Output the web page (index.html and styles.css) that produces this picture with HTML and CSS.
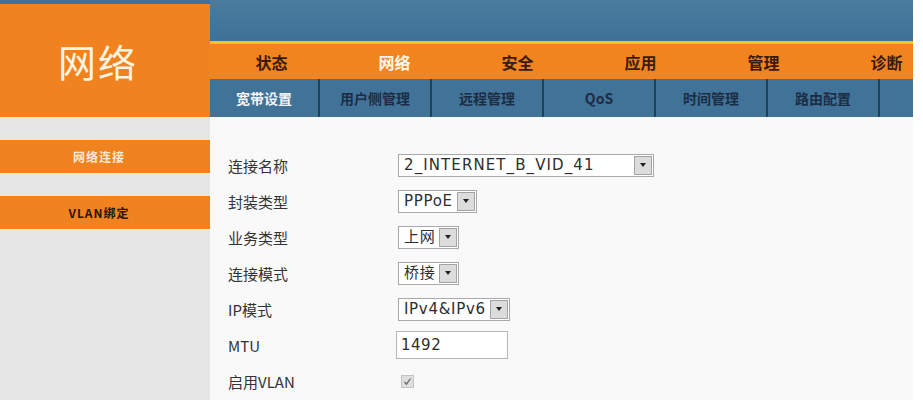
FILE: index.html
```html
<!DOCTYPE html>
<html lang="zh-CN">
<head>
    <meta charset="UTF-8">
    <title>网络 - 宽带设置</title>
    <link rel="stylesheet" href="styles.css">
</head>
<body>
    <div class="page">
        <div class="brand">网络</div>
        <div class="header">
            <div class="banner"></div>
            <div class="nav">
                <span class="tab">状态</span>
                <span class="tab active">网络</span>
                <span class="tab">安全</span>
                <span class="tab">应用</span>
                <span class="tab">管理</span>
                <span class="tab">诊断</span>
            </div>
            <div class="subnav">
                <span class="sub first active">宽带设置</span>
                <span class="sub">用户侧管理</span>
                <span class="sub">远程管理</span>
                <span class="sub">QoS</span>
                <span class="sub">时间管理</span>
                <span class="sub">路由配置</span>
                <span class="sub last"></span>
            </div>
        </div>

        <div class="sidebar">
            <div class="side-item active">网络连接</div>
            <div class="side-item">VLAN绑定</div>
        </div>

        <div class="content">
            <div class="form">
                <label>连接名称</label>
                <div class="select wide"><span class="value">2_INTERNET_B_VID_41</span><span class="arrow"></span></div>

                <label>封装类型</label>
                <div class="select"><span class="value">PPPoE</span><span class="arrow"></span></div>

                <label>业务类型</label>
                <div class="select"><span class="value">上网</span><span class="arrow"></span></div>

                <label>连接模式</label>
                <div class="select"><span class="value">桥接</span><span class="arrow"></span></div>

                <label>IP模式</label>
                <div class="select"><span class="value">IPv4&amp;IPv6</span><span class="arrow"></span></div>

                <label>MTU</label>
                <div class="text-input">1492</div>

                <label>启用VLAN</label>
                <div class="checkbox">
                    <svg width="9" height="9" viewBox="0 0 9 9"><path d="M1.5 5 L3.5 7.2 L7.5 1.5" fill="none" stroke="#6a6a6a" stroke-width="1.3"/></svg>
                </div>
            </div>
        </div>
    </div>
</body>
</html>
```

FILE: styles.css
```css
body {
    margin: 0;
    background: #ffffff;
    font-family: "Noto Sans CJK SC", "Liberation Sans", sans-serif;
    overflow: hidden;
}
.page {
    width: 913px;
    height: 400px;
    display: grid;
    grid-template-columns: 210px 703px;
    grid-template-rows: 117px 283px;
}
.brand {
    border-top: 4px solid #41739a;
    background: #f0821f;
    color: #fff4e0;
    font-size: 38px;
    display: flex;
    align-items: center;
    justify-content: center;
    padding-right: 14px;
    letter-spacing: 2px;
}
.header {
    display: flex;
    flex-direction: column;
}
.banner {
    height: 41px;
    background: linear-gradient(#4a7ca0, #3f7196);
    border-bottom: 3px solid #f4c21c;
}
.nav {
    height: 35px;
    background: #f28420;
    display: flex;
    align-items: center;
}
.tab {
    width: 123px;
    flex: none;
    text-align: center;
    font-size: 16px;
    font-weight: 700;
    color: #3a1a0c;
}
.tab.active {
    color: #fff6e6;
}
.subnav {
    height: 38px;
    background: #417399;
    display: flex;
}
.sub {
    width: 110px;
    flex: none;
    border-right: 2px solid #22405a;
    display: flex;
    align-items: center;
    justify-content: center;
    font-size: 14px;
    font-weight: 700;
    color: #1b2d44;
}
.sub.first {
    width: 108px;
}
.sub.active {
    color: #f2f4f8;
}
.sub.last {
    width: 31px;
    border-right: none;
}
.sidebar {
    background: #e6e6e6;
    padding-top: 23px;
    display: flex;
    flex-direction: column;
    gap: 23px;
}
.side-item {
    height: 33px;
    background: #f0821f;
    display: flex;
    align-items: center;
    justify-content: center;
    font-size: 12px;
    font-weight: 700;
    letter-spacing: 1px;
    color: #2a1408;
    padding-right: 12px;
}
.side-item.active {
    color: #fbe9d6;
}
.content {
    background: #f9f9f9;
    padding: 30px 0 0 18px;
}
.form {
    display: grid;
    grid-template-columns: 170px auto;
    grid-auto-rows: 36px;
    align-items: center;
    justify-items: start;
}
label {
    font-size: 15px;
    color: #333;
}
.select {
    display: flex;
    align-items: stretch;
    height: 19px;
    border: 1px solid #a9a9a9;
    background: #fff;
    padding: 1px;
}
.select .value {
    font-family: "DejaVu Sans", "Noto Sans CJK SC", sans-serif;
    font-size: 15px;
    letter-spacing: 0.7px;
    line-height: 19px;
    color: #2e2e2e;
    padding: 0 4px 0 4px;
}
.select.wide .value {
    width: 226px;
    letter-spacing: 1.1px;
}
.arrow {
    width: 16px;
    background: #dcdcdc;
    border: 1px solid #a3a3a3;
    display: flex;
    align-items: center;
    justify-content: center;
}
.arrow::after {
    content: "";
    border-left: 3px solid transparent;
    border-right: 3px solid transparent;
    border-top: 4px solid #222;
}
.text-input {
    box-sizing: border-box;
    width: 112px;
    height: 28px;
    margin-left: -2px;
    border: 1px solid #b5b5b5;
    background: #fff;
    padding: 0 4px;
    font-family: "DejaVu Sans", sans-serif;
    font-size: 15px;
    letter-spacing: 0.5px;
    line-height: 26px;
    color: #2e2e2e;
}
.checkbox {
    width: 11px;
    height: 11px;
    margin-left: 3px;
    border: 1px solid #c2c2c2;
    background: #dedede;
    display: flex;
    align-items: center;
    justify-content: center;
}
```
